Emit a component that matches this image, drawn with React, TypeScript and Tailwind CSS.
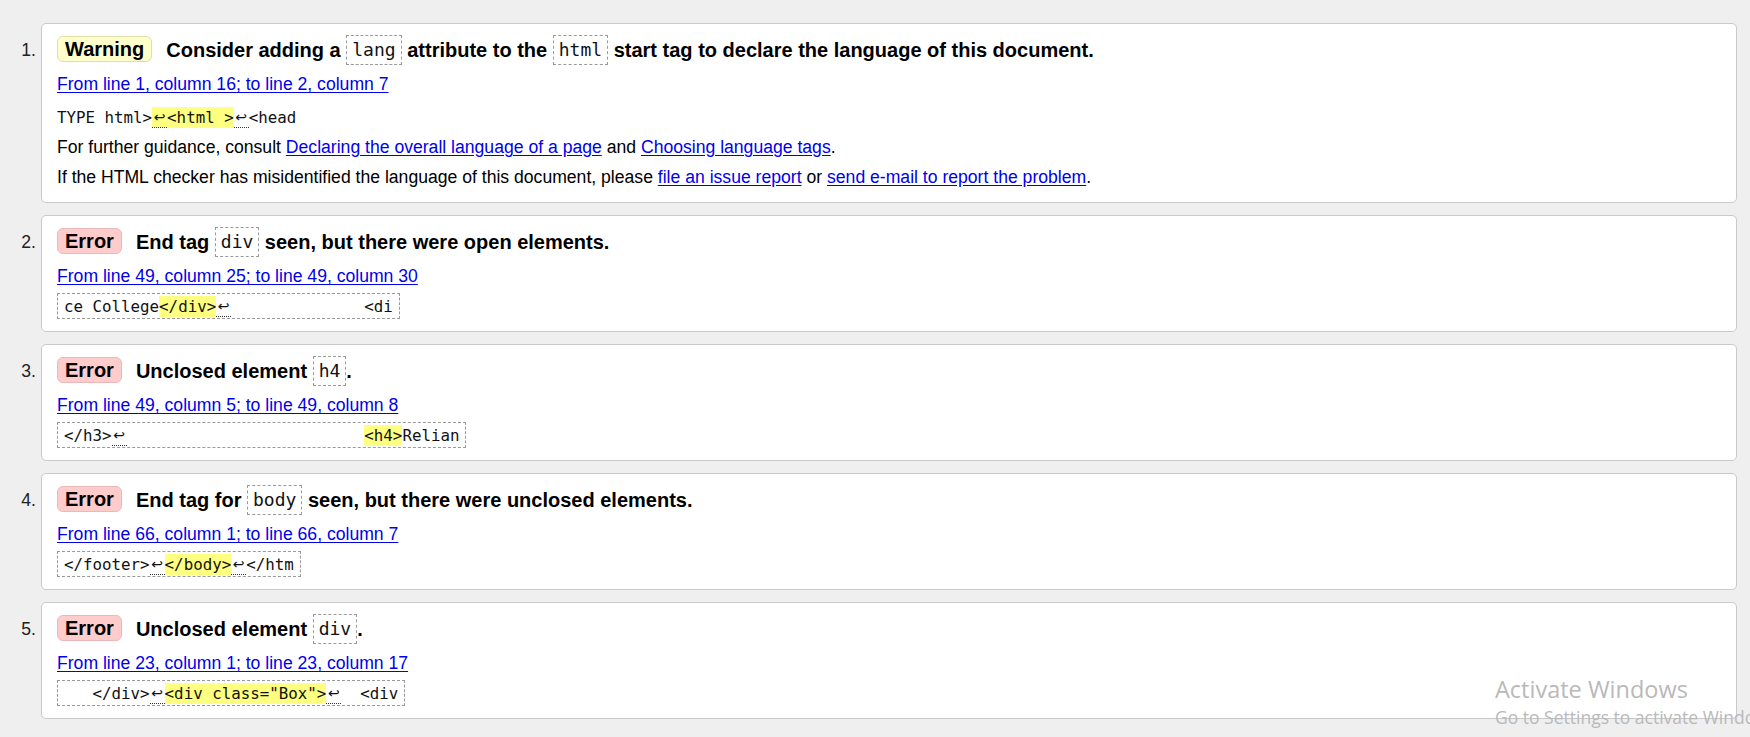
import React from "react";

type Seg = { t: string; hl?: boolean; arrow?: boolean };

type Item = {
  kind: "Warning" | "Error";
  title: React.ReactNode;
  link: string;
  code: Seg[];
  boxed: boolean;
  extra?: boolean;
};

const Tag = ({ children }: { children: React.ReactNode }) => (
  <code className="inline-block h-[30px] px-[5px] align-top border border-dashed border-[#9a9a9a] font-['DejaVu_Sans_Mono','Liberation_Mono',monospace] text-[18px] font-normal leading-[28px] text-[#111]">
    {children}
  </code>
);

const items: Item[] = [
  {
    kind: "Warning",
    title: (
      <>
        Consider adding a <Tag>lang</Tag> attribute to the <Tag>html</Tag> start tag to declare the
        language of this document.
      </>
    ),
    link: "From line 1, column 16; to line 2, column 7",
    code: [
      { t: "TYPE html>" },
      { t: "↩", arrow: true, hl: true },
      { t: "<html >", hl: true },
      { t: "↩", arrow: true },
      { t: "<head" },
    ],
    boxed: false,
    extra: true,
  },
  {
    kind: "Error",
    title: (
      <>
        End tag <Tag>div</Tag> seen, but there were open elements.
      </>
    ),
    link: "From line 49, column 25; to line 49, column 30",
    code: [
      { t: "ce College" },
      { t: "</div>", hl: true },
      { t: "↩", arrow: true },
      { t: "              <di" },
    ],
    boxed: true,
  },
  {
    kind: "Error",
    title: (
      <>
        Unclosed element <Tag>h4</Tag>.
      </>
    ),
    link: "From line 49, column 5; to line 49, column 8",
    code: [
      { t: "</h3>" },
      { t: "↩", arrow: true },
      { t: "                         " },
      { t: "<h4>", hl: true },
      { t: "Relian" },
    ],
    boxed: true,
  },
  {
    kind: "Error",
    title: (
      <>
        End tag for <Tag>body</Tag> seen, but there were unclosed elements.
      </>
    ),
    link: "From line 66, column 1; to line 66, column 7",
    code: [
      { t: "</footer>" },
      { t: "↩", arrow: true },
      { t: "</body>", hl: true },
      { t: "↩", arrow: true },
      { t: "</htm" },
    ],
    boxed: true,
  },
  {
    kind: "Error",
    title: (
      <>
        Unclosed element <Tag>div</Tag>.
      </>
    ),
    link: "From line 23, column 1; to line 23, column 17",
    code: [
      { t: "   </div>" },
      { t: "↩", arrow: true },
      { t: '<div class="Box">', hl: true },
      { t: "↩", arrow: true },
      { t: "  <div" },
    ],
    boxed: true,
  },
];

function Badge({ kind }: { kind: Item["kind"] }) {
  const warn = kind === "Warning";
  return (
    <span
      className={
        warn
          ? "mt-[1px] h-[26px] shrink-0 rounded-[6px] border border-[#e2dea8] bg-[#ffffcc] px-[7px] text-[20px] font-bold leading-[24px] text-black"
          : "mt-[1px] h-[26px] shrink-0 rounded-[6px] border border-[#e9b9b9] bg-[#ffcccc] px-[7px] text-[20px] font-bold leading-[24px] text-black"
      }
    >
      {kind}
    </span>
  );
}

function CodeLine({ segs }: { segs: Seg[] }) {
  return (
    <>
      {segs.map((s, i) => {
        if (s.arrow) {
          return (
            <span
              key={i}
              className={
                s.hl
                  ? "inline-block h-[21px] w-[15px] border-b border-dotted border-[#333] bg-[#ffff80] text-center font-['DejaVu_Sans',sans-serif] text-[14px] leading-[20px]"
                  : "inline-block h-[21px] w-[15px] border-b border-dotted border-[#333] text-center font-['DejaVu_Sans',sans-serif] text-[14px] leading-[20px]"
              }
            >
              ↩
            </span>
          );
        }
        return (
          <span
            key={i}
            className={s.hl ? "inline-block h-[21px] bg-[#ffff80] leading-[21px]" : "inline-block h-[21px] leading-[21px]"}
          >
            {s.t}
          </span>
        );
      })}
    </>
  );
}

const linkCls = "text-[#0000ee] underline underline-offset-[2px]";

export default function App() {
  return (
    <div className="relative h-[737px] w-full overflow-hidden bg-[#efefef] pt-[23px] pr-[13px] font-['Liberation_Sans',Arial,sans-serif] text-black">
      <ol className="flex flex-col gap-[12px]">
        {items.map((it, idx) => (
          <li key={idx} className="flex">
            <div className="w-[41px] shrink-0 pt-[12px] pr-[5px] text-right text-[17.6px] leading-[30px] text-[#222]">
              {idx + 1}.
            </div>
            <div
              className={
                it.extra
                  ? "flex-1 rounded-[5px] border border-[#c9c9c9] bg-white pt-[11px] pb-[14px] pl-[15px]"
                  : "flex-1 rounded-[5px] border border-[#c9c9c9] bg-white pt-[11px] pb-[12px] pl-[15px]"
              }
            >
              <div className="flex h-[30px] items-start">
                <Badge kind={it.kind} />
                <span className="ml-[14px] whitespace-nowrap text-[20px] font-bold leading-[30px]">{it.title}</span>
              </div>
              <div className="mt-[8px] h-[22px] text-[17.6px] leading-[22px]">
                <a className={linkCls} href="#">
                  {it.link}
                </a>
              </div>
              {it.boxed ? (
                <div className="mt-[6px] flex h-[26px] w-fit items-center whitespace-pre border border-dashed border-[#9a9a9a] px-[6px] font-['DejaVu_Sans_Mono','Liberation_Mono',monospace] text-[15.8px] text-[#111]">
                  <CodeLine segs={it.code} />
                </div>
              ) : (
                <div className="mt-[9px] flex h-[26px] items-center whitespace-pre font-['DejaVu_Sans_Mono','Liberation_Mono',monospace] text-[15.8px] text-[#111]">
                  <CodeLine segs={it.code} />
                </div>
              )}
              {it.extra && (
                <>
                  <p className="mt-[6px] h-[22px] text-[17.6px] leading-[22px]">
                    For further guidance, consult{" "}
                    <a className={linkCls} href="#">
                      Declaring the overall language of a page
                    </a>{" "}
                    and{" "}
                    <a className={linkCls} href="#">
                      Choosing language tags
                    </a>
                    .
                  </p>
                  <p className="mt-[8px] h-[22px] text-[17.6px] leading-[22px]">
                    If the HTML checker has misidentified the language of this document, please{" "}
                    <a className={linkCls} href="#">
                      file an issue report
                    </a>{" "}
                    or{" "}
                    <a className={linkCls} href="#">
                      send e-mail to report the problem
                    </a>
                    .
                  </p>
                </>
              )}
            </div>
          </li>
        ))}
      </ol>

      {/* Windows activation watermark */}
      <div className="pointer-events-none absolute left-[1495px] top-[674px] whitespace-nowrap font-['Open_Sans','Noto_Sans',sans-serif] text-[#b9b9b9]">
        <div className="text-[23.5px] leading-[31px]">Activate Windows</div>
        <div className="text-[17.5px] leading-[24px]">Go to Settings to activate Windows.</div>
      </div>
    </div>
  );
}
